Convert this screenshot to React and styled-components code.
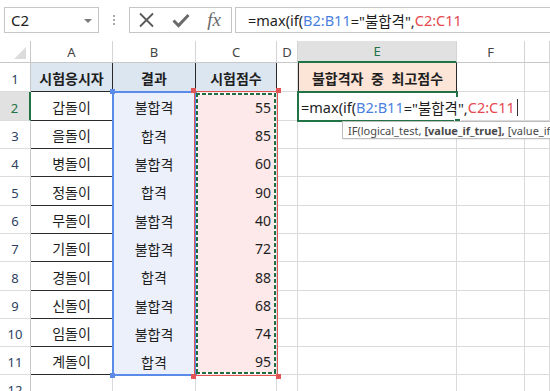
import React from 'react';
import styled, { createGlobalStyle } from 'styled-components';

const GlobalStyle = createGlobalStyle`
  html, body {
    margin: 0;
    padding: 0;
    background: #fff;
  }
  body {
    font-family: "Noto Sans", "Noto Sans CJK KR", sans-serif;
  }
`;

const GREEN = '#217346';
const GRID = '#dadada';
const DARK = '#2a2a2a';

const Window = styled.div`
  width: 550px;
  height: 391px;
  overflow: hidden;
  background: #fff;
  color: #1e1e1e;
`;

// formula bar ---------------------------------------------------------

const FormulaBar = styled.div`
  display: flex;
  align-items: center;
  height: 41px;
  box-sizing: border-box;
  padding: 7px 0 8px 4px;
`;

const NameBox = styled.div`
  width: 95px;
  height: 26px;
  box-sizing: border-box;
  border: 1px solid #c6c6c6;
  display: flex;
  align-items: center;
  justify-content: space-between;
  padding: 0 6px 0 6px;
  font-size: 15px;
  color: #222;
`;

const Caret = styled.span`
  width: 0;
  height: 0;
  border-left: 4px solid transparent;
  border-right: 4px solid transparent;
  border-top: 4px solid #7a7a7a;
  margin-top: 1px;
`;

const Grip = styled.div`
  width: 30px;
  display: flex;
  flex-direction: column;
  align-items: center;
  gap: 2px;
`;

const GripDot = styled.span`
  width: 2px;
  height: 2px;
  background: #a9a9a9;
`;

const ButtonGroup = styled.div`
  width: 103px;
  height: 26px;
  box-sizing: border-box;
  border: 1px solid #c6c6c6;
  display: flex;
  align-items: center;
`;

const IconSlot = styled.div`
  width: ${p => p.$w}px;
  display: flex;
  align-items: center;
  justify-content: center;
  color: #5e5e5e;
`;

const Fx = styled.span`
  font-family: "Liberation Serif", "DejaVu Serif", serif;
  font-style: italic;
  font-size: 19px;
  color: #6a6a6a;
  line-height: 1;
  margin-top: -2px;
`;

const FormulaInput = styled.div`
  flex: 1;
  margin-left: 3px;
  height: 26px;
  box-sizing: border-box;
  border: 1px solid #c6c6c6;
  border-right: none;
  padding-left: 12px;
  display: flex;
  align-items: center;
  font-size: 14.5px;
  white-space: nowrap;
  color: #1e1e1e;
`;

// sheet ---------------------------------------------------------------

const Sheet = styled.div`
  display: grid;
  grid-template-columns: 31px 82px 83px 81px 21px 159px 68px 1fr;
  grid-template-rows: 22px 29px 29px 28px 28px 29px 28px 28px 29px 28px 28px 28px 28px;
`;

const Placed = styled.div`
  grid-column: ${p => p.$col};
  grid-row: ${p => p.$row};
  box-sizing: border-box;
  min-width: 0;
`;

const Corner = styled(Placed)`
  background: #fff;
  border-right: 1px solid #c8c8c8;
  border-bottom: 1px solid #c8c8c8;
  display: flex;
  align-items: flex-end;
  justify-content: flex-end;
  padding: 0 4px 3px 0;
`;

const CornerMark = styled.span`
  width: 0;
  height: 0;
  border-left: 12px solid transparent;
  border-bottom: 12px solid #dcdcdc;
`;

const ColHead = styled(Placed)`
  display: flex;
  align-items: center;
  justify-content: center;
  font-size: 13px;
  background: ${p => (p.$active ? '#e1e1e1' : '#fff')};
  color: ${p => (p.$active ? GREEN : '#444')};
  border-right: 1px solid #d4d4d4;
  border-bottom: ${p => (p.$active ? `2px solid ${GREEN}` : '1px solid #c8c8c8')};
`;

const RowHead = styled(Placed)`
  display: flex;
  align-items: center;
  justify-content: center;
  padding-top: 3px;
  font-size: 13px;
  background: ${p => (p.$active ? '#e1e1e1' : '#fff')};
  color: ${p => (p.$active ? GREEN : '#2d3f5f')};
  border-right: ${p => (p.$active ? `2px solid ${GREEN}` : '1px solid #c8c8c8')};
  border-bottom: 1px solid #dcdcdc;
`;

const Cell = styled(Placed)`
  display: flex;
  align-items: center;
  justify-content: ${p => (p.$right ? 'flex-end' : 'center')};
  padding: ${p => (p.$right ? '1px 5px 0 0' : '1px 0 0 0')};
  background: ${p => p.$bg || '#fff'};
  border-right: 1px solid ${p => (p.$dark ? DARK : GRID)};
  border-bottom: ${p => (p.$open ? 'none' : `1px solid ${p.$dark ? DARK : GRID}`)};
  font-size: 14px;
  font-weight: ${p => (p.$bold ? 700 : 400)};
  white-space: nowrap;
`;

const TitleCell = styled(Cell)`
  border-left: 1px solid ${DARK};
  border-right: 1px solid ${DARK};
  word-spacing: 4px;
`;

const Range = styled(Placed)`
  position: relative;
  z-index: 1;
  margin: -1px;
  pointer-events: none;
`;

const RefRange = styled(Range)`
  border: 2px solid #5b8be8;
  margin: -1px -1px -1px -1px;
`;

const CopyRange = styled(Range)`
  border: 1px solid #e25555;
  margin: -1px -1px -1px -2px;

  &::after {
    content: '';
    position: absolute;
    inset: 1px;
    background:
      repeating-linear-gradient(90deg, #1f6e3f 0 4px, #fff 4px 6px) top / 100% 2px no-repeat,
      repeating-linear-gradient(90deg, #1f6e3f 0 4px, #fff 4px 6px) bottom / 100% 2px no-repeat,
      repeating-linear-gradient(180deg, #1f6e3f 0 4px, #fff 4px 6px) left / 2px 100% no-repeat,
      repeating-linear-gradient(180deg, #1f6e3f 0 4px, #fff 4px 6px) right / 2px 100% no-repeat;
  }
`;

const Handle = styled.span`
  position: absolute;
  z-index: 2;
  width: 5px;
  height: 5px;
  background: ${p => p.$color};
  ${p => (p.$top ? 'top: -4px;' : 'bottom: -4px;')}
  ${p => (p.$left ? 'left: -4px;' : 'right: -4px;')}
`;

const Editor = styled(Placed)`
  position: relative;
  z-index: 3;
  margin: -1px;
  border: 2px solid ${GREEN};
  display: flex;
  align-items: center;
  padding: 1px 0 0 2px;
  overflow: visible;
`;

const EditText = styled.span`
  font-size: 14.5px;
  white-space: nowrap;
  background: #fff;
  color: #1e1e1e;
  display: inline-flex;
  align-items: center;
`;

const Ref = styled.span`
  color: ${p => p.$color};
`;

const TextCursor = styled.span`
  width: 1px;
  height: 17px;
  margin-left: 2px;
  background: #333;
`;

const FillHandle = styled.span`
  position: absolute;
  right: -5px;
  bottom: -5px;
  width: 5px;
  height: 5px;
  background: ${GREEN};
  border: 1px solid #fff;
`;

const Tooltip = styled.div`
  position: absolute;
  top: calc(100% + 1px);
  left: 43px;
  height: 18px;
  box-sizing: border-box;
  padding: 0 5px;
  border: 1px solid #bdbdbd;
  background: #fff;
  font-size: 11px;
  color: #4a4a4a;
  white-space: nowrap;
  display: flex;
  align-items: center;
  box-shadow: 1px 1px 1px rgba(0, 0, 0, 0.06);

  b {
    font-weight: 700;
    margin: 0 3px;
  }
`;

const people = [
  ['갑돌이', '불합격', 55],
  ['을돌이', '합격', 85],
  ['병돌이', '불합격', 60],
  ['정돌이', '합격', 90],
  ['무돌이', '불합격', 40],
  ['기돌이', '불합격', 72],
  ['경돌이', '합격', 88],
  ['신돌이', '불합격', 68],
  ['임돌이', '불합격', 74],
  ['계돌이', '합격', 95]
];

const colLetters = ['A', 'B', 'C', 'D', 'E', 'F', ''];

const Formula = () => (
  <>
    =max(if(<Ref $color="#4a7fe0">B2:B11</Ref>="불합격",<Ref $color="#e5484d">C2:C11</Ref>
  </>
);

const CrossIcon = () => (
  <svg width="17" height="16" viewBox="0 0 17 16">
    <path d="M2 1.5 L15 14.5 M15 1.5 L2 14.5" stroke="#5a5a5a" strokeWidth="1.8" fill="none" />
  </svg>
);

const CheckIcon = () => (
  <svg width="18" height="15" viewBox="0 0 18 15">
    <path d="M1.5 7.5 L6.5 12.5 L16.5 2" stroke="#6a6a6a" strokeWidth="3" fill="none" />
  </svg>
);

const App = () => {
  return (
    <Window>
      <GlobalStyle />
      <FormulaBar>
        <NameBox>
          C2
          <Caret />
        </NameBox>
        <Grip>
          <GripDot />
          <GripDot />
          <GripDot />
        </Grip>
        <ButtonGroup>
          <IconSlot $w={32}>
            <CrossIcon />
          </IconSlot>
          <IconSlot $w={38}>
            <CheckIcon />
          </IconSlot>
          <IconSlot $w={28}>
            <Fx>fx</Fx>
          </IconSlot>
        </ButtonGroup>
        <FormulaInput>
          <Formula />
        </FormulaInput>
      </FormulaBar>

      <Sheet>
        <Corner $col={1} $row={1}>
          <CornerMark />
        </Corner>
        {colLetters.map((c, i) => (
          <ColHead key={'h' + i} $col={i + 2} $row={1} $active={c === 'E'}>
            {c}
          </ColHead>
        ))}
        {Array.from({ length: 12 }, (_, i) => (
          <RowHead key={'r' + i} $col={1} $row={i + 2} $active={i === 1}>
            {i + 1}
          </RowHead>
        ))}

        {/* row 1 */}
        <Cell $col={2} $row={2} $bg="#dce6f1" $bold $dark>시험응시자</Cell>
        <Cell $col={3} $row={2} $bg="#dce6f1" $bold $dark>결과</Cell>
        <Cell $col={4} $row={2} $bg="#dce6f1" $bold $dark>시험점수</Cell>
        <Cell $col={5} $row={2} />
        <TitleCell $col={6} $row={2} $bg="#fce4d6" $bold>불합격자 중 최고점수</TitleCell>
        <Cell $col={7} $row={2} />
        <Cell $col={8} $row={2} />

        {people.map(([name, result, score], i) => (
          <React.Fragment key={name}>
            <Cell $col={2} $row={i + 3} $dark>{name}</Cell>
            <Cell $col={3} $row={i + 3} $bg="#ecf0fb" $open>{result}</Cell>
            <Cell $col={4} $row={i + 3} $bg="#fde9e9" $open $right>{score}</Cell>
            <Cell $col={5} $row={i + 3} />
            {i > 0 && <Cell $col={6} $row={i + 3} />}
            <Cell $col={7} $row={i + 3} />
            <Cell $col={8} $row={i + 3} />
          </React.Fragment>
        ))}

        {[2, 3, 4, 5, 6, 7, 8].map(c => (
          <Cell key={'e' + c} $col={c} $row={13} />
        ))}

        <RefRange $col={3} $row="3 / 13">
          <Handle $color="#5b8be8" $top $left />
          <Handle $color="#5b8be8" $left />
        </RefRange>
        <CopyRange $col={4} $row="3 / 13">
          <Handle $color="#e25555" $top $left />
          <Handle $color="#e25555" $top />
          <Handle $color="#e25555" $left />
          <Handle $color="#e25555" />
        </CopyRange>

        <Editor $col={6} $row={3}>
          <EditText>
            <Formula />
            <TextCursor />
          </EditText>
          <FillHandle />
          <Tooltip>
            IF(logical_test,<b>[value_if_true],</b>[value_if_false])
          </Tooltip>
        </Editor>
      </Sheet>
    </Window>
  );
};

export default App;
